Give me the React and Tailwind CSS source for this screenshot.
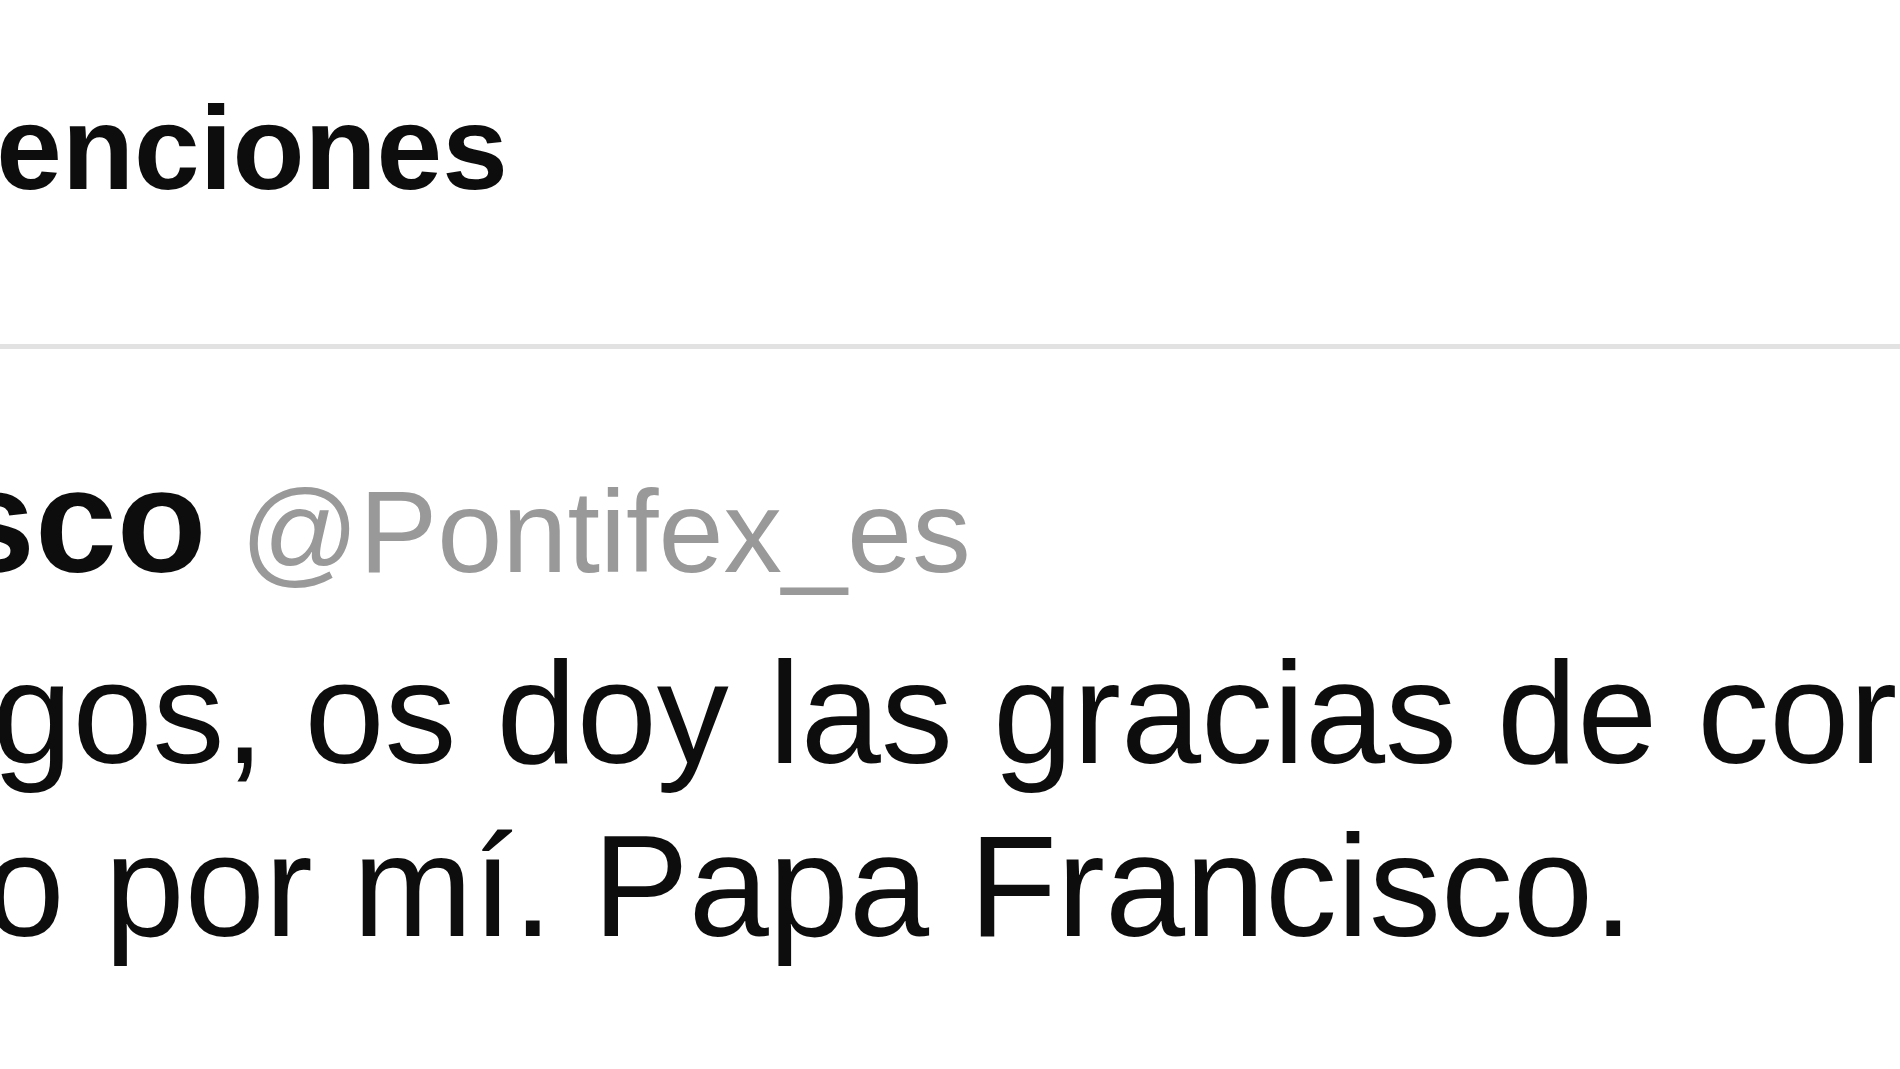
import React from 'react';

// Zoomed crop of a "Menciones" stream with one tweet
export default function App() {
  return (
    <div className="w-[1900px] h-[1069px] overflow-hidden bg-white text-[#0d0d0d] font-['Liberation_Sans',Arial,sans-serif]">
      {/* Stream header */}
      <div className="pt-[90px] pb-[137px] whitespace-nowrap">
        <h1 className="ml-[-102px] text-[118px] leading-[117px] font-bold">Menciones</h1>
      </div>

      <div className="h-[5px] bg-[#e2e2e2]" />

      {/* Tweet */}
      <div className="pt-[97px] w-[4000px] whitespace-nowrap">
        <div className="ml-[-880px] text-[147px] leading-[150px]">
          <span className="font-bold">Papa Francisco</span>{' '}
          <span className="ml-[-7px] text-[117px] text-[#999]">@Pontifex_es</span>
        </div>
        <p className="ml-[-864px] mt-[20px] text-[144px] leading-[173px]">
          Queridos amigos, os doy las gracias de corazón y os pido que
          <br />
          sigáis rezando por mí. Papa Francisco.
        </p>
      </div>
    </div>
  );
}
